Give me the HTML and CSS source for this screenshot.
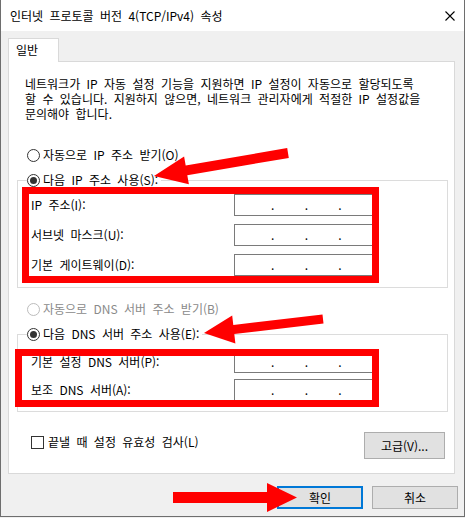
FILE: index.html
```html
<!DOCTYPE html>
<html lang="ko">
<head>
<meta charset="utf-8">
<title>인터넷 프로토콜 버전 4(TCP/IPv4) 속성</title>
<link rel="stylesheet" href="styles.css">
</head>
<body>
<div class="window">
  <div class="titlebar">
    <span class="title">인터넷 프로토콜 버전 4(TCP/IPv4) 속성</span>
    <svg class="close" width="10" height="10" viewBox="0 0 10 10"><path d="M0.5 0.5L9.5 9.5M9.5 0.5L0.5 9.5" stroke="#000" stroke-width="1.1" fill="none"/></svg>
  </div>
  <div class="client">
    <div class="tabs"><div class="tab">일반</div></div>
    <div class="panel">
      <p class="desc"><span class="line">네트워크가 IP 자동 설정 기능을 지원하면 IP 설정이 자동으로 할당되도록</span><span class="line">할 수 있습니다. 지원하지 않으면, 네트워크 관리자에게 적절한 IP 설정값을</span><span class="line">문의해야 합니다.</span></p>
      <div class="option opt-first"><span class="radio"></span><span>자동으로 IP 주소 받기(O)</span></div>
      <fieldset class="group group-ip">
        <legend class="option"><span class="radio checked"></span><span>다음 IP 주소 사용(S):</span></legend>
        <div class="field"><span class="label">IP 주소(I):</span><span class="ip"><i>.</i><i>.</i><i>.</i></span></div>
        <div class="field"><span class="label">서브넷 마스크(U):</span><span class="ip"><i>.</i><i>.</i><i>.</i></span></div>
        <div class="field"><span class="label">기본 게이트웨이(D):</span><span class="ip"><i>.</i><i>.</i><i>.</i></span></div>
      </fieldset>
      <div class="option disabled opt-dns"><span class="radio"></span><span>자동으로 DNS 서버 주소 받기(B)</span></div>
      <fieldset class="group group-dns">
        <legend class="option"><span class="radio checked"></span><span>다음 DNS 서버 주소 사용(E):</span></legend>
        <div class="field"><span class="label">기본 설정 DNS 서버(P):</span><span class="ip"><i>.</i><i>.</i><i>.</i></span></div>
        <div class="field"><span class="label">보조 DNS 서버(A):</span><span class="ip"><i>.</i><i>.</i><i>.</i></span></div>
      </fieldset>
      <div class="footer-row">
        <label class="check"><span class="box"></span><span>끝낼 때 설정 유효성 검사(L)</span></label>
        <button class="btn btn-adv">고급(V)...</button>
      </div>
    </div>
    <div class="actions">
      <button class="btn btn-action btn-default">확인</button>
      <button class="btn btn-action">취소</button>
    </div>
  </div>
</div>
<div class="highlight hl-ip"></div>
<div class="highlight hl-dns"></div>
<svg class="arrows" width="465" height="518" viewBox="0 0 465 518">
  <polygon fill="#f00" points="287.2,148.1 185.7,165.5 184.1,156.6 154,176 188.9,184.2 187.3,175.3 288.8,157.9"/>
  <polygon fill="#f00" points="322.5,314.5 233.3,325 232.2,315.6 204,333 235.4,343.4 234.3,334 323.5,323.5"/>
  <polygon fill="#f00" points="173,492 267,492 267,483 297,497.5 267,512 267,503 173,503"/>
</svg>
</body>
</html>
```

FILE: styles.css
```css
html, body {
  margin: 0;
  padding: 0;
}
body {
  width: 465px;
  height: 518px;
  position: relative;
  overflow: hidden;
  background: #f0f0f0;
  font-family: "Noto Sans CJK KR", "Malgun Gothic", sans-serif;
  font-size: 12px;
  word-spacing: 3px;
  color: #000;
}
.window {
  box-sizing: border-box;
  width: 465px;
  height: 517px;
  border: 1px solid #6e6e6e;
  border-top: none;
  display: flex;
  flex-direction: column;
  background: #f0f0f0;
}
.titlebar {
  flex-shrink: 0;
  height: 31px;
  background: #fff;
  display: flex;
  align-items: center;
  justify-content: space-between;
  padding: 0 9px 0 9px;
}
.title {
  line-height: 16px;
}
.close {
  display: block;
}
.client {
  flex: 1;
  display: flex;
  flex-direction: column;
  padding-top: 7px;
}
.tabs {
  display: flex;
  height: 23px;
  margin-left: 7px;
}
.tab {
  box-sizing: border-box;
  width: 51px;
  height: 24px;
  border: 1px solid #d9d9d9;
  border-bottom: none;
  background: #fff;
  padding-left: 7px;
  line-height: 22px;
  position: relative;
  z-index: 1;
}
.panel {
  box-sizing: border-box;
  margin: 0 9px 0 7px;
  border: 1px solid #d9d9d9;
  background: #fff;
  padding: 14px 6px 14px 8px;
}
.desc {
  margin: 0 0 0 8px;
}
.desc .line {
  display: block;
  height: 15px;
  line-height: 15px;
  white-space: nowrap;
}
.option {
  display: flex;
  align-items: center;
  gap: 3px;
  height: 16px;
  line-height: 16px;
}
.opt-first,
.opt-dns {
  margin-left: 10px;
}
.opt-first {
  margin-top: 26px;
}
.opt-dns {
  margin-top: 13px;
}
.radio {
  box-sizing: border-box;
  width: 13px;
  height: 13px;
  border: 1px solid #333;
  border-radius: 50%;
  background: #fff;
  display: flex;
  align-items: center;
  justify-content: center;
  flex-shrink: 0;
}
.radio.checked::after {
  content: "";
  width: 7px;
  height: 7px;
  border-radius: 50%;
  background: #333;
}
.disabled {
  color: #8a8a8a;
}
.disabled .radio {
  border-color: #bcbcbc;
}
.group {
  margin: 9px 0 0;
  padding: 0;
  border: 1px solid #dcdcdc;
  min-width: 0;
}
.group legend {
  margin-left: 9px;
  padding: 0 3px 0 0;
}
.group-ip {
  padding: 6px 0 11px;
}
.group-dns {
  padding: 9px 0 10px;
}
.field {
  display: flex;
  align-items: center;
  height: 22px;
  padding-left: 13px;
}
.group-ip .field + .field {
  margin-top: 8px;
}
.group-dns .field + .field {
  margin-top: 6px;
}
.label {
  width: 203px;
  line-height: 16px;
}
.ip {
  box-sizing: border-box;
  width: 139px;
  height: 22px;
  border: 1px solid #7a7a7a;
  background: #fff;
  display: flex;
  padding-left: 36px;
  line-height: 20px;
  word-spacing: 0;
}
.ip i {
  font-style: normal;
  width: 35px;
}
.footer-row {
  display: flex;
  align-items: flex-start;
  margin-top: 20px;
}
.check {
  display: flex;
  align-items: center;
  gap: 4px;
  margin: 2px 0 0 14px;
  line-height: 16px;
}
.box {
  box-sizing: border-box;
  width: 13px;
  height: 13px;
  border: 1px solid #333;
  background: #fff;
}
.btn {
  box-sizing: border-box;
  font-family: inherit;
  font-size: 12px;
  color: #000;
  background: #e1e1e1;
  border: 1px solid #adadad;
  padding: 0;
  margin: 0;
}
.btn-adv {
  margin-left: auto;
  margin-right: 3px;
  width: 81px;
  height: 27px;
}
.actions {
  display: flex;
  justify-content: flex-end;
  gap: 9px;
  margin-top: 12px;
  padding-right: 6px;
}
.btn-action {
  width: 86px;
  height: 23px;
}
.btn-default {
  border: 2px solid #0078d7;
}
.highlight {
  position: absolute;
  box-sizing: border-box;
  border: 7px solid #f00;
}
.hl-ip {
  left: 22px;
  top: 187px;
  width: 357px;
  height: 96px;
}
.hl-dns {
  left: 15px;
  top: 349px;
  width: 364px;
  height: 58px;
}
.arrows {
  position: absolute;
  left: 0;
  top: 0;
  pointer-events: none;
}
```
